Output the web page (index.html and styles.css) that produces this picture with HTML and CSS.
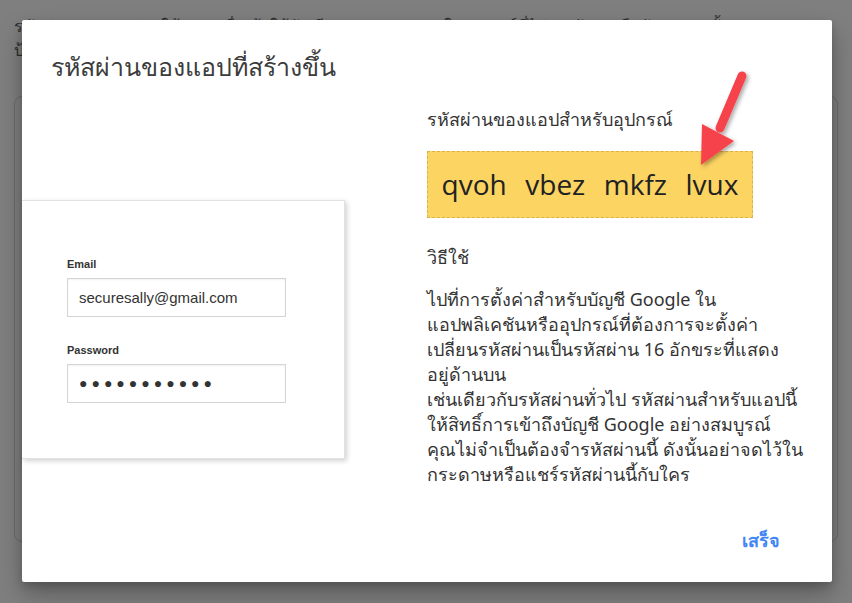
FILE: index.html
```html
<!DOCTYPE html>
<html lang="th">
<head>
<meta charset="utf-8">
<title>รหัสผ่านของแอป</title>
<link rel="stylesheet" href="styles.css">
</head>
<body>
<div class="page">
  <p class="page-text"><span class="page-line">รหัสผ่านของแอปช่วยให้คุณลงชื่อเข้าใช้บัญชี Google จากแอปในอุปกรณ์ที่ไม่รองรับการยืนยันแบบ 2 ขั้นตอน</span><span class="page-line">ป้อน</span></p>
  <div class="page-card"></div>
</div>

<div class="dialog" role="dialog">
  <h1 class="dialog-title">รหัสผ่านของแอปที่สร้างขึ้น</h1>
  <div class="dialog-body">
    <div class="illus-col">
      <div class="illus-card">
        <div class="field-label">Email</div>
        <div class="field-box">securesally@gmail.com</div>
        <div class="field-label pw-label">Password</div>
        <div class="field-box dots">●●●●●●●●●●●</div>
      </div>
    </div>
    <div class="info-col">
      <div class="info-label">รหัสผ่านของแอปสำหรับอุปกรณ์</div>
      <div class="code-box">qvoh&nbsp; vbez&nbsp; mkfz&nbsp; lvux</div>
      <div class="howto">วิธีใช้</div>
      <p class="instructions">ไปที่การตั้งค่าสำหรับบัญชี Google ใน<br>แอปพลิเคชันหรืออุปกรณ์ที่ต้องการจะตั้งค่า<br>เปลี่ยนรหัสผ่านเป็นรหัสผ่าน 16 อักขระที่แสดง<br>อยู่ด้านบน<br>เช่นเดียวกับรหัสผ่านทั่วไป รหัสผ่านสำหรับแอปนี้<br>ให้สิทธิ์การเข้าถึงบัญชี Google อย่างสมบูรณ์<br>คุณไม่จำเป็นต้องจำรหัสผ่านนี้ ดังนั้นอย่าจดไว้ใน<br>กระดาษหรือแชร์รหัสผ่านนี้กับใคร</p>
    </div>
  </div>
  <div class="dialog-actions">
    <button class="done-btn">เสร็จ</button>
  </div>
  <svg class="arrow" width="80" height="120" viewBox="0 0 80 120">
    <defs>
      <filter id="sh" x="-30%" y="-30%" width="160%" height="160%">
        <feDropShadow dx="2" dy="2" stdDeviation="2" flood-color="#000" flood-opacity="0.35"/>
      </filter>
    </defs>
    <g filter="url(#sh)">
      <line x1="56" y1="8" x2="34" y2="60" stroke="#f5424b" stroke-width="9" stroke-linecap="round"/>
      <polygon points="15,97 16,56 48,73" fill="#f5424b"/>
    </g>
  </svg>
</div>
</body>
</html>
```

FILE: styles.css
```css
html, body {
  margin: 0;
  padding: 0;
}
body {
  width: 852px;
  height: 603px;
  overflow: hidden;
  background: #7f7f7f;
  font-family: "Noto Sans", "Liberation Sans", sans-serif;
  position: relative;
}
.page {
  padding: 14px 14px 0 14px;
}
.page-text {
  margin: 0;
  font-size: 16px;
  line-height: 24px;
  color: #2e2e2e;
  height: 60px;
}
.page-line {
  display: block;
  white-space: nowrap;
  overflow: hidden;
}
.page-card {
  margin-top: 22px;
  height: 444px;
  border: 1px solid #6c6c6c;
  border-radius: 8px;
}
.dialog {
  position: absolute;
  left: 22px;
  top: 20px;
  width: 810px;
  height: 562px;
  background: #fff;
  border-radius: 2px;
  box-shadow: 0 12px 24px rgba(0,0,0,0.28), 0 4px 8px rgba(0,0,0,0.15);
  display: flex;
  flex-direction: column;
  box-sizing: border-box;
}
.dialog-title {
  margin: 0;
  padding: 30px 0 0 29px;
  font-size: 25px;
  font-weight: 400;
  line-height: 33px;
  color: #3c3c3c;
}
.dialog-body {
  display: flex;
  flex: 1;
}
.illus-col {
  width: 323px;
  padding-top: 117px;
}
.illus-card {
  height: 259px;
  background: #fff;
  border: 1px solid #e2e2e2;
  border-left: none;
  box-shadow: 2px 2px 5px rgba(0,0,0,0.18);
  padding: 56px 0 0 45px;
  box-sizing: border-box;
}
.field-label {
  font-family: "Liberation Sans", Arial, sans-serif;
  font-size: 11px;
  font-weight: 700;
  color: #333;
  line-height: 14px;
}
.pw-label {
  margin-top: 26px;
}
.field-box {
  margin-top: 7px;
  width: 219px;
  height: 39px;
  box-sizing: border-box;
  border: 1px solid #d5d5d5;
  box-shadow: inset 0 1px 2px rgba(0,0,0,0.06);
  padding: 0 0 0 11px;
  font-family: "Liberation Sans", Arial, sans-serif;
  font-size: 15px;
  line-height: 37px;
  color: #333;
}
.dots {
  font-size: 14px;
  letter-spacing: 4px;
  color: #333;
}
.info-col {
  margin-left: 82px;
  padding-top: 23px;
  width: 400px;
}
.info-label {
  font-size: 18px;
  line-height: 26px;
  color: #333;
}
.code-box {
  margin-top: 19px;
  width: 326px;
  height: 67px;
  box-sizing: border-box;
  background: #fcd462;
  border: 1px dashed #d8b24c;
  text-align: center;
  font-family: "Open Sans", "Noto Sans", sans-serif;
  font-size: 28px;
  word-spacing: 2px;
  line-height: 65px;
  color: #222;
}
.howto {
  margin-top: 26px;
  font-size: 18px;
  line-height: 26px;
  color: #333;
}
.instructions {
  margin: 17px 0 0 0;
  font-size: 18px;
  line-height: 25px;
  color: #333;
}
.dialog-actions {
  display: flex;
  justify-content: flex-end;
  padding: 0 52px 29px 0;
}
.done-btn {
  border: none;
  background: none;
  padding: 0;
  font-family: "Noto Sans", "Liberation Sans", sans-serif;
  font-size: 18px;
  font-weight: 700;
  color: #4285f4;
  line-height: 26px;
  cursor: pointer;
}
.arrow {
  position: absolute;
  left: 664px;
  top: 48px;
}
```
